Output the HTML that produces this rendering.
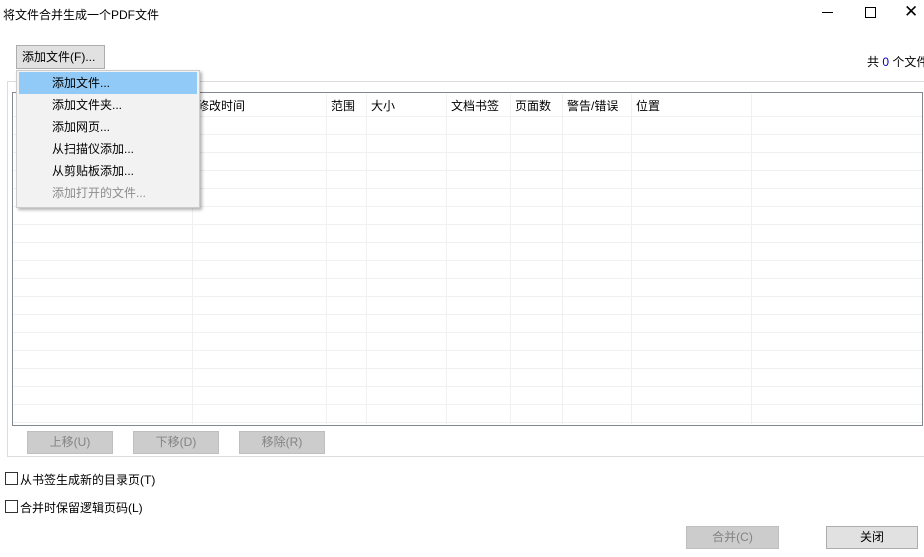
<!DOCTYPE html>
<html><head><meta charset="utf-8"><style>
body{margin:0;width:924px;height:557px;background:#fff;position:relative;overflow:hidden;font-family:"Liberation Sans","Noto Sans CJK SC","Microsoft YaHei",sans-serif;font-size:12px;color:#000}
.a{position:absolute;white-space:nowrap}
.btn{position:absolute;background:#e1e1e1;border:1px solid #adadad;box-sizing:border-box;text-align:center;line-height:20px}
.dis{background:#cccccc;border-color:#bfbfbf;color:#838383}
.mi{position:absolute;left:35px;height:22px;line-height:22px}
.vl{position:absolute;top:1px;bottom:1px;width:1px;background:#f0f0f0}
.ht{position:absolute;top:4px}
.cb{position:absolute;width:11px;height:11px;border:1px solid #333;}
</style></head><body>
<div class="a" style="left:3px;top:6px">将文件合并生成一个PDF文件</div>
<div class="a" style="left:822px;top:12px;width:11px;height:1px;background:#000"></div>
<div class="a" style="left:865px;top:7px;width:9px;height:9px;border:1px solid #000"></div>
<div class="a" style="left:904px;top:0px;font-size:17px;line-height:24px">✕</div>
<div class="a" style="left:867px;top:53px">共 <span style="color:#0000c0">0</span> 个文件</div>

<div class="a" style="left:7px;top:81px;width:917px;height:376px;border:1px solid #dcdcdc;border-right:none;box-sizing:border-box"></div>
<div class="a" style="left:12px;top:92px;width:911px;height:334px;border:1px solid #828790;box-sizing:border-box;background:#fff;overflow:hidden">
 <div class="a" style="left:0;top:23px;width:100%;height:310px;background:repeating-linear-gradient(to bottom,#f0f0f0 0,#f0f0f0 1px,transparent 1px,transparent 18px)"></div>
 <div class="vl" style="left:179px"></div><div class="vl" style="left:313px"></div><div class="vl" style="left:353px"></div><div class="vl" style="left:433px"></div><div class="vl" style="left:497px"></div><div class="vl" style="left:549px"></div><div class="vl" style="left:618px"></div><div class="vl" style="left:738px"></div>
 <div class="ht" style="left:184px">修改时间</div><div class="ht" style="left:318px">范围</div><div class="ht" style="left:358px">大小</div><div class="ht" style="left:438px">文档书签</div><div class="ht" style="left:502px">页面数</div><div class="ht" style="left:554px">警告/错误</div><div class="ht" style="left:623px">位置</div>
</div>
<div class="btn dis" style="left:27px;top:431px;width:86px;height:23px">上移(U)</div>
<div class="btn dis" style="left:133px;top:431px;width:86px;height:23px">下移(D)</div>
<div class="btn dis" style="left:239px;top:431px;width:86px;height:23px">移除(R)</div>
<div class="cb" style="left:5px;top:472px"></div><div class="a" style="left:20px;top:471px">从书签生成新的目录页(T)</div>
<div class="cb" style="left:5px;top:500px"></div><div class="a" style="left:20px;top:499px">合并时保留逻辑页码(L)</div>
<div class="btn dis" style="left:686px;top:526px;width:93px;height:23px">合并(C)</div>
<div class="btn" style="left:826px;top:526px;width:92px;height:23px">关闭</div>

<div class="btn" style="left:16px;top:45px;width:89px;height:24px;text-align:left;padding-left:5px;line-height:22px">添加文件(F)...</div>
<div class="a" style="left:16px;top:70px;width:184px;height:138px;background:#f2f2f2;border:1px solid #ccc;box-sizing:border-box;box-shadow:2px 2px 3px rgba(0,0,0,.3)">
 <div class="a" style="left:2px;top:1px;width:178px;height:22px;background:#91c9f7"></div>
 <div class="mi" style="top:1px">添加文件...</div>
 <div class="mi" style="top:23px">添加文件夹...</div>
 <div class="mi" style="top:45px">添加网页...</div>
 <div class="mi" style="top:67px">从扫描仪添加...</div>
 <div class="mi" style="top:89px">从剪贴板添加...</div>
 <div class="mi" style="top:111px;color:#8d8d8d">添加打开的文件...</div>
</div>
</body></html>
